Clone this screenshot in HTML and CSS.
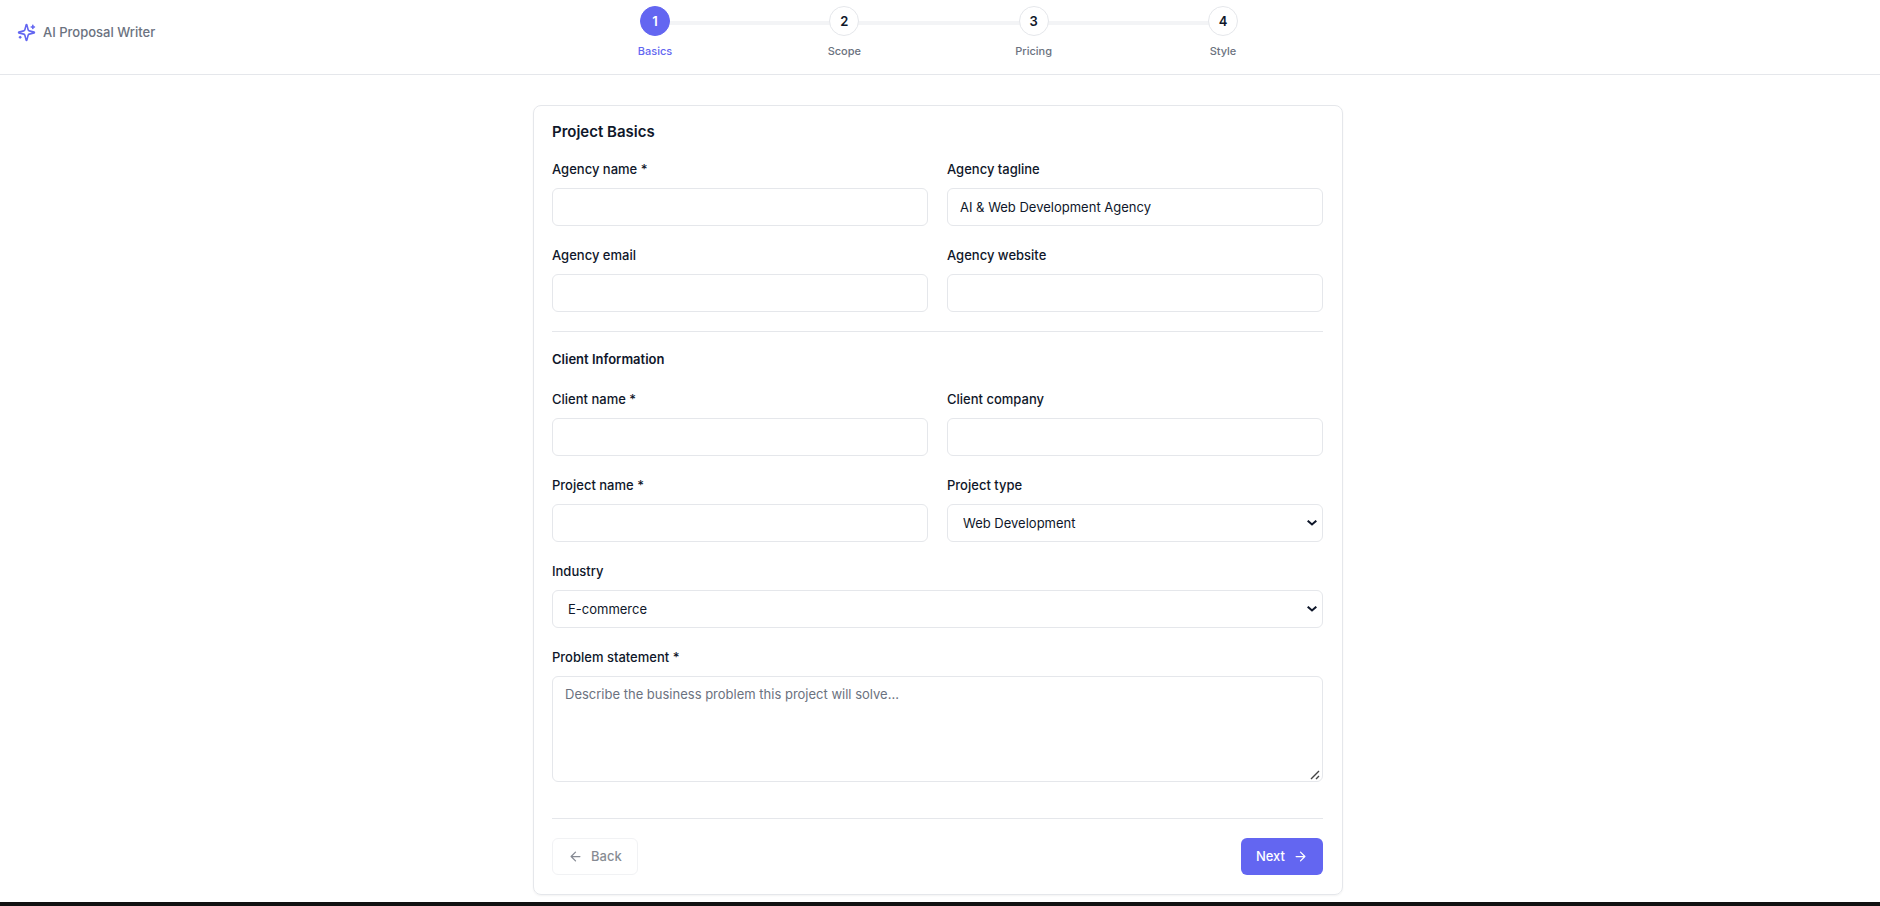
FILE: index.html
```html
<!DOCTYPE html>
<html lang="en">
<head>
  <meta charset="UTF-8" />
  <meta name="viewport" content="width=device-width, initial-scale=1" />
  <title>AI Proposal Writer</title>
  <link rel="stylesheet" href="styles.css">
</head>
<body>
  <header class="topbar">
    <div class="brand">
      <svg class="brand-icon" viewBox="0 0 24 24">
        <path d="M9.937 15.5A2 2 0 0 0 8.5 14.063l-6.135-1.582a.5.5 0 0 1 0-.962L8.5 9.936A2 2 0 0 0 9.937 8.5l1.582-6.135a.5.5 0 0 1 .963 0L14.063 8.5A2 2 0 0 0 15.5 9.937l6.135 1.581a.5.5 0 0 1 0 .964L15.5 14.063a2 2 0 0 0-1.437 1.437l-1.582 6.135a.5.5 0 0 1-.963 0z" />
        <path d="M20 3v4M22 5h-4M4 17v2M5 18H3" />
      </svg>
      <span>AI Proposal Writer</span>
    </div>

    <ol class="stepper">
      <li class="step active"><span class="step-num">1</span><span class="step-label">Basics</span></li>
      <li class="step"><span class="step-num">2</span><span class="step-label">Scope</span></li>
      <li class="step"><span class="step-num">3</span><span class="step-label">Pricing</span></li>
      <li class="step"><span class="step-num">4</span><span class="step-label">Style</span></li>
    </ol>
  </header>

  <main>
    <form class="card">
      <h1>Project Basics</h1>

      <div class="grid">
        <div class="field">
          <label for="agency-name">Agency name *</label>
          <input type="text" id="agency-name" />
        </div>
        <div class="field">
          <label for="agency-tagline">Agency tagline</label>
          <input type="text" id="agency-tagline" value="AI &amp; Web Development Agency" />
        </div>
        <div class="field">
          <label for="agency-email">Agency email</label>
          <input type="email" id="agency-email" />
        </div>
        <div class="field">
          <label for="agency-website">Agency website</label>
          <input type="text" id="agency-website" />
        </div>
      </div>

      <hr />

      <h2>Client Information</h2>

      <div class="grid">
        <div class="field">
          <label for="client-name">Client name *</label>
          <input type="text" id="client-name" />
        </div>
        <div class="field">
          <label for="client-company">Client company</label>
          <input type="text" id="client-company" />
        </div>
        <div class="field">
          <label for="project-name">Project name *</label>
          <input type="text" id="project-name" />
        </div>
        <div class="field">
          <label for="project-type">Project type</label>
          <select id="project-type">
            <option>Web Development</option>
          </select>
        </div>
        <div class="field wide">
          <label for="industry">Industry</label>
          <select id="industry">
            <option>E-commerce</option>
          </select>
        </div>
        <div class="field wide">
          <label for="problem">Problem statement *</label>
          <textarea id="problem" placeholder="Describe the business problem this project will solve..."></textarea>
        </div>
      </div>

      <div class="actions">
        <button type="button" class="btn btn-back" disabled>
          <svg viewBox="0 0 24 24"><path d="m12 19-7-7 7-7M19 12H5" /></svg>
          Back
        </button>
        <button type="button" class="btn btn-next">
          Next
          <svg viewBox="0 0 24 24"><path d="M5 12h14M12 5l7 7-7 7" /></svg>
        </button>
      </div>
    </form>
  </main>

  <footer class="bottom-bar"></footer>
</body>
</html>
```

FILE: styles.css
```css
* {
  box-sizing: border-box;
}
body {
  margin: 0;
  min-height: 100vh;
  display: flex;
  flex-direction: column;
  font-family: Inter, sans-serif;
  font-size: 13px;
  line-height: 19px;
  color: #0f172a;
  background: #fff;
}
svg {
  fill: none;
  stroke: currentColor;
  stroke-width: 2;
  stroke-linecap: round;
  stroke-linejoin: round;
}

/* Header */
.topbar {
  display: grid;
  grid-template-columns: 1fr minmax(0, 608px) 1fr;
  padding: 6px 19px 15px 17px;
  border-bottom: 1px solid #e5e7eb;
}
.brand {
  display: flex;
  align-items: center;
  gap: 7px;
  color: #6b7280;
  font-weight: 500;
}
.brand-icon {
  width: 19px;
  height: 19px;
  color: #6366f1;
}
.stepper {
  display: flex;
  justify-content: space-between;
  margin: 0;
  padding: 0;
  list-style: none;
  background: linear-gradient(#f3f4f6, #f3f4f6) no-repeat center 15px / calc(100% - 40px) 4px;
}
.step {
  width: 40px;
  display: flex;
  flex-direction: column;
  align-items: center;
  gap: 7px;
}
.step-num {
  display: flex;
  align-items: center;
  justify-content: center;
  width: 30px;
  height: 30px;
  border: 1px solid #e5e7eb;
  border-radius: 50%;
  background: #fff;
  font-weight: 600;
}
.step-label {
  font-size: 11px;
  line-height: 16px;
  font-weight: 500;
  color: #6b7280;
}
.active .step-num {
  background: #6366f1;
  border-color: #6366f1;
  color: #fff;
}
.active .step-label {
  color: #6366f1;
}

/* Form card */
main {
  flex: 1;
  padding: 30px 4px 7px 0;
}
.card {
  max-width: 810px;
  margin: 0 auto;
  padding: 18px 19px 19px 18px;
  border: 1px solid #e5e7eb;
  border-radius: 8px;
  box-shadow: 0 1px 2px rgba(0, 0, 0, 0.05);
}
h1 {
  margin: 0 0 20px;
  font-size: 15px;
  line-height: 16px;
  font-weight: 600;
}
h2 {
  margin: 0 0 21px;
  font-size: 13px;
  font-weight: 600;
}
hr {
  width: 100%;
  margin: 19px 0 18px;
  border: 0;
  border-top: 1px solid #e5e7eb;
}
.grid {
  display: grid;
  grid-template-columns: 1fr 1fr;
  gap: 20px 19px;
}
.wide {
  grid-column: 1 / -1;
}
.field {
  display: flex;
  flex-direction: column;
  gap: 9px;
}
label {
  font-weight: 500;
}
input,
select,
textarea {
  width: 100%;
  height: 38px;
  padding: 0 12px;
  border: 1px solid #e5e7eb;
  border-radius: 6px;
  background: #fff;
  color: inherit;
  font: inherit;
}
select {
  appearance: none;
  padding: 0 24px 0 15px;
  background: #fff url("data:image/svg+xml,%3Csvg xmlns='http://www.w3.org/2000/svg' width='10' height='6' fill='none' stroke='%230f172a' stroke-width='2'%3E%3Cpath d='M.7.7 5 4.5 9.3.7'/%3E%3C/svg%3E") no-repeat right 5px center;
}
textarea {
  display: block;
  height: 106px;
  padding: 8px 12px;
  resize: vertical;
}
textarea::placeholder {
  color: #6b7280;
}
textarea::-webkit-resizer {
  background: url("data:image/svg+xml,%3Csvg xmlns='http://www.w3.org/2000/svg' width='12' height='12' stroke='%23444' stroke-width='1.4'%3E%3Cpath d='M1 10 9 2M6 10l3-3'/%3E%3C/svg%3E") no-repeat right bottom;
}

/* Buttons */
.actions {
  display: flex;
  justify-content: space-between;
  margin-top: 36px;
  padding-top: 19px;
  border-top: 1px solid #e5e7eb;
}
.btn {
  display: flex;
  align-items: center;
  gap: 8px;
  height: 37px;
  padding: 0 15px;
  border: 0;
  border-radius: 6px;
  font: inherit;
  font-weight: 500;
  cursor: pointer;
}
.btn svg {
  width: 15px;
  height: 15px;
}
.btn-back {
  border: 1px solid #e5e7eb;
  background: #fff;
  color: #0f172a;
  opacity: 0.5;
  cursor: default;
}
.btn-next {
  background: #6366f1;
  color: #fff;
}

.bottom-bar {
  height: 4px;
  background: #111;
}
```
